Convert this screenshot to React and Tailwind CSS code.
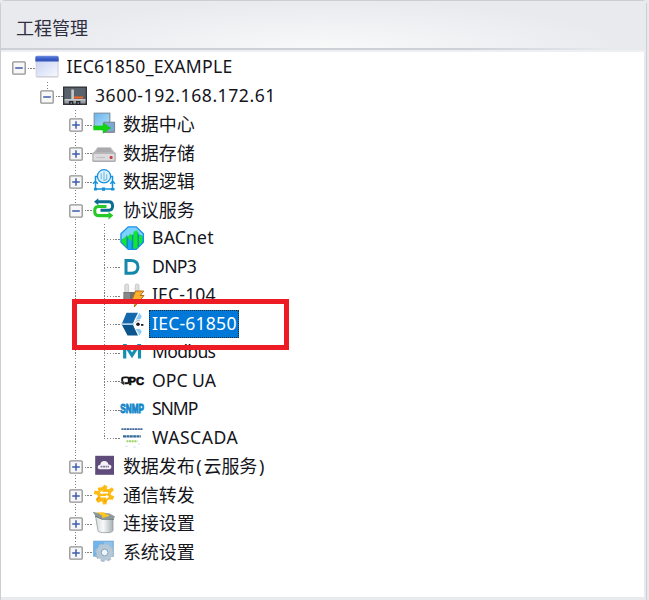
import React from "react";

const svg = "block h-6 w-6 overflow-visible";

function WindowIcon() {
  return (
    <svg className={svg} viewBox="0 0 24 24">
      <defs>
        <linearGradient id="win" x1="0" y1="0" x2="1" y2="1">
          <stop offset="0" stopColor="#c9d3f3" />
          <stop offset="1" stopColor="#f6f8ff" />
        </linearGradient>
        <linearGradient id="winbar" x1="0" y1="0" x2="0" y2="1">
          <stop offset="0" stopColor="#6f8fe0" />
          <stop offset="0.5" stopColor="#3a5cc4" />
          <stop offset="1" stopColor="#3152b8" />
        </linearGradient>
      </defs>
      <rect x="0.7" y="1.5" width="22.8" height="21" rx="1.5" fill="#c9cad0" />
      <rect x="1.4" y="6" width="21.2" height="15.2" fill="url(#win)" />
      <path d="M.3 6.6V2.5Q.3.8 2 .8H22Q23.7.8 23.7 2.5V6.6Z" fill="url(#winbar)" />
    </svg>
  );
}

function DeviceIcon() {
  return (
    <svg className={svg} viewBox="0 0 24 24">
      <rect x="0" y="2.5" width="24" height="18.5" fill="#303338" />
      <rect x="1.3" y="3.8" width="21.4" height="12" fill="#59616a" />
      <path d="M8.3 5.5h2.6v9.5H22.5v2.5H1.5V15H8.3Z" fill="#c6c9cc" />
      <rect x="11" y="12.5" width="9" height="2" fill="#f2661f" />
      <path d="M1.5 16.5H22.5V19.5H1.5Z" fill="#999ea3" />
      <rect x="6" y="17" width="4.4" height="4" fill="#25282c" />
      <rect x="13" y="17" width="4.4" height="4" fill="#25282c" />
      <rect x="7.5" y="18.3" width="1.5" height="1.5" fill="#8a8f94" />
      <rect x="14.5" y="18.3" width="1.5" height="1.5" fill="#8a8f94" />
    </svg>
  );
}

function DataCenterIcon() {
  return (
    <svg className={svg} viewBox="0 0 24 24">
      <defs>
        <linearGradient id="scr" x1="0" y1="0" x2="1" y2="1">
          <stop offset="0" stopColor="#69b5ee" />
          <stop offset="1" stopColor="#b4def8" />
        </linearGradient>
      </defs>
      <rect x="2.2" y="1.2" width="15.6" height="14.5" fill="url(#scr)" stroke="#7d94a6" strokeWidth="1.2" />
      <rect x="12" y="10.3" width="10.5" height="9.6" fill="#7ba9d4" stroke="#7c8b98" strokeWidth="1.2" />
      <path d="M12 20.2H22.5" stroke="#8a9198" strokeWidth="1.5" />
      <path d="M1.7 13.9H11V10.8L18.7 16L11 21.2V18H1.7Z" fill="#12d412" stroke="#16b81b" strokeWidth="0.5" />
    </svg>
  );
}

function DriveIcon() {
  return (
    <svg className={svg} viewBox="0 0 24 24">
      <path d="M5.5 6.3H18.7L23.8 13H.4Z" fill="#bcbcbe" />
      <path d="M6 7H18L20.5 11H3.5Z" fill="#aaaaad" />
      <path d="M.3 12.7Q.3 11.6 1.5 11.6H22.6Q23.8 11.6 23.8 12.7V19.5Q23.8 21 22.4 21H1.7Q.3 21 .3 19.5Z" fill="#adadb0" />
      <rect x="1.5" y="12.8" width="21" height="6.8" rx="1" fill="#dcdcdf" />
      <path d="M4.5 16.5H13" stroke="#c0c0c4" strokeWidth="1.2" />
      <rect x="17.6" y="15" width="3" height="3" rx="1" fill="#c84249" />
    </svg>
  );
}

function LogicIcon() {
  return (
    <svg className={svg} viewBox="0 0 24 24" fill="none" stroke="#1692dc" strokeWidth="1.5">
      <path d="M6 7.5H3.5V20H20.5V7.5H18" />
      <circle cx="12" cy="7.3" r="6.6" fill="#dff2fb" strokeWidth="1.2" />
      <path d="M9.2 4.2V10.2M12 2.7V11.5L14.7 10.4V5.2" stroke="#79bfe3" strokeWidth="1.2" />
      <path d="M1 14.8L3.4 12.4L5.8 14.8M18.2 14.8L20.7 12.4L23 14.8" />
      <path d="M10 18.4H13V21.8H10Z" fill="#1692dc" stroke="none" />
      <path d="M2 20.2H5M19 20.2H22.5" strokeWidth="2.5" />
    </svg>
  );
}

function ProtocolIcon() {
  return (
    <svg className={svg} viewBox="0 0 24 24" fill="none">
      <path d="M5.5 3.8H17Q20.6 3.8 20.6 8Q20.6 12.2 17 12.2H8.5" stroke="#0b6e91" strokeWidth="2.9" />
      <path d="M6.3 .3V7.3L2 3.8Z" fill="#0b6e91" />
      <path d="M14.5 8.5H6.2Q2.7 8.5 2.7 13Q2.7 17.6 6.2 17.6H17" stroke="#27c928" strokeWidth="3.1" />
      <path d="M16.5 13.8V21.4L21.3 17.6Z" fill="#27c928" />
    </svg>
  );
}

function BacnetIcon() {
  return (
    <svg className={svg} viewBox="0 0 24 24">
      <path d="M8 .2H16.5L24 7.6V16.4L16.5 24H8L.3 16.4V7.6Z" fill="#198dea" />
      <path d="M8.4 1.5H16L22.7 8V10L15.5 7L8.5 11L1.6 13.5V8Z" fill="#7bd3fb" />
      <path d="M1.5 14L7 9.4V21.6L1.5 16Z" fill="#10e735" />
      <path d="M8.2 10L10.5 7.5L12.3 10V15L8.2 19Z" fill="#10e735" />
      <path d="M8 19V12.5L11.5 15V23H8Z" fill="#19a6f2" />
      <path d="M13.4 6L16.5 4L18 6.5V21L16.2 22.8H13.4Z" fill="#10e735" />
      <path d="M19 10L21 8.7L22.5 10.5V16L19 19.5Z" fill="#10e735" />
      <path d="M7 9.4V21.8M12.3 9V23M18 6.5V21" stroke="#0a8a78" strokeWidth="0.8" />
    </svg>
  );
}

function DnpIcon() {
  return (
    <svg className={svg} viewBox="0 0 24 24">
      <path d="M6 5.5V18.3H10.5Q18 18.3 18 11.9Q18 5.5 10.5 5.5Z" fill="none" stroke="#1587ab" strokeWidth="3" />
    </svg>
  );
}

function PlugIcon() {
  return (
    <svg className={svg} viewBox="0 0 24 24">
      <rect x="4.8" y="1" width="3.8" height="9" rx="1.6" fill="#dededf" stroke="#bdbdbf" strokeWidth="0.7" />
      <rect x="15.2" y="1" width="3.8" height="9" rx="1.6" fill="#dededf" stroke="#bdbdbf" strokeWidth="0.7" />
      <path d="M3.4 9H20.7V16L16.5 20H7.3L3.4 16Z" fill="#6e6e70" />
      <path d="M4.2 9.7H10V17H6.5L4.2 15Z" fill="#88888a" />
      <path d="M15.5 8H23.8L20.2 12.5H24L14.3 24L15.8 17H12Z" fill="#f7b12f" stroke="#b76816" strokeWidth="1" />
    </svg>
  );
}

function IecIcon() {
  return (
    <svg className={svg} viewBox="0 0 24 24">
      <path d="M6.5 .7H18L14.5 7.8L13 11.4H2Z" fill="#1469ad" />
      <path d="M2 13H13L14.5 16.3L18 23.5H7.5Z" fill="#0c558c" />
      <path d="M19.5 .7L21.8 4.8L20 7.5H15.8Z" fill="#8dccf6" />
      <path d="M19.5 23.5L21.8 19.5L20 17H15.8Z" fill="#8dccf6" />
      <path d="M1 12.2H14" stroke="#86bce0" strokeWidth="0.9" />
      <circle cx="18" cy="12.3" r="1.8" fill="#171b20" />
      <rect x="21" y="12" width="2.4" height="1.8" fill="#222" />
      <path d="M15 10.5L17 8.7H20" stroke="#8b9aa5" strokeWidth="0.8" fill="none" />
    </svg>
  );
}

function ModbusIcon() {
  return (
    <svg className={svg} viewBox="0 0 24 24">
      <path d="M4.7 18.6V5.5H5.6L12 15.3L18.4 5.5H19.5V18.6" fill="none" stroke="#168eb2" strokeWidth="3.2" />
    </svg>
  );
}

function OpcIcon() {
  return (
    <svg className={svg} viewBox="0 0 24 24">
      <text x="8.6" y="15.5" textLength="15.6" lengthAdjust="spacingAndGlyphs" fontFamily="Liberation Sans" fontWeight="700" fontSize="11" fill="#0d0d0d" stroke="#0d0d0d" strokeWidth="0.6">PC</text>
      <path d="M2.2 12.8V9.8Q2.2 8.4 4.5 8.4H7Q8.8 8.4 8.8 10V12.5Q8.8 14.3 7 14.3H4.5" fill="none" stroke="#151515" strokeWidth="1.9" />
      <path d="M.2 13.5L4.2 12.3V16.2Z" fill="#333" />
    </svg>
  );
}

function SnmpIcon() {
  return (
    <svg className={svg} viewBox="0 0 24 24">
      <g transform="translate(0 16.3) scale(1 1.45)">
        <text x="0.3" y="0" textLength="23.6" lengthAdjust="spacingAndGlyphs" fontFamily="Liberation Sans" fontWeight="700" fontSize="8.6" fill="#1687c9" stroke="#1687c9" strokeWidth="0.7">SNMP</text>
      </g>
    </svg>
  );
}

function WascadaIcon() {
  return (
    <svg className={svg} viewBox="0 0 24 24">
      <path d="M1.4 3.2H22.8" stroke="#416a9b" strokeWidth="1.8" strokeDasharray="2.2 .5" />
      <path d="M3 10.3H20.8" stroke="#356b99" strokeWidth="2.2" strokeDasharray="3 .4" />
      <path d="M6.5 15.2H17.5" stroke="#9ad466" strokeWidth="2" strokeDasharray="2 .6" />
      <path d="M5 20.3H8M13 21H16M18 18H20" stroke="#d5e4ef" strokeWidth="1" />
    </svg>
  );
}

function CloudIcon() {
  return (
    <svg className={svg} viewBox="0 0 24 24">
      <rect x="3.2" y="1.8" width="18.8" height="19" fill="#5f4c7b" />
      <path d="M8 15.3Q5.3 15 5.8 12.4Q6.2 10.8 8.2 10.8Q8.8 6.8 12.4 7Q15.8 7.1 16.4 10.5Q19.6 10.5 19.4 13.2Q19.1 15.3 17 15.3Z" fill="#f4f1f7" />
      <path d="M8.5 12.6H17" stroke="#8b7da1" strokeWidth="1.6" strokeDasharray="2 .5" />
    </svg>
  );
}

function GearIcon() {
  return (
    <svg className={svg} viewBox="0 0 24 24">
      <path
        d="M5.5 4.7L8 4.6L10.5 4L12.3 1.7L15.3 3.3L14.7 6L17 6.3L20 4.2L22 7L19 9.7L18.7 11.7L22.3 13.5L20.8 16.8L16.7 16.5L15 18L14.5 21.2L11 21.5L10 18.2L5.7 19.7L3.7 16.6L6 13.7L5.3 11.8L1.8 11L2.5 7.5L6.7 8Z"
        fill="#fdbb14"
      />
      <path d="M16 9.7H9.2M15 13.7H8.5" stroke="#fff" strokeWidth="1.4" />
      <path d="M10.5 7.2L7.5 9.7L10.5 11.5ZM14 11.7L17.2 13.7L14 16Z" fill="#fff" />
      <path d="M12 17L14 19M7 14L4.5 17" stroke="#f59c12" strokeWidth="1.4" />
    </svg>
  );
}

function ConnectIcon() {
  return (
    <svg className={svg} viewBox="0 0 24 24">
      <defs>
        <linearGradient id="bin" x1="0" y1="0" x2="1" y2="0">
          <stop offset="0" stopColor="#d5dbdd" />
          <stop offset="0.45" stopColor="#f7f9f9" />
          <stop offset="1" stopColor="#a8b1b4" />
        </linearGradient>
      </defs>
      <path d="M3.5 5H21V19.4Q20.5 21.7 14 21.7Q6.5 21.7 6 20Z" fill="url(#bin)" stroke="#949d9f" strokeWidth="0.8" />
      <path d="M.5 .8L5 1.7L17 2.3L23 5.5L22 7.6L10 7.8L3.5 5Z" fill="#8b999c" />
      <path d="M4.5 1.6L12.5 1.2L14 3.5H17V5L10.5 7L10 4.4Z" fill="#ffc51e" />
      <path d="M3 5L10 8.2H22" stroke="#616c6e" strokeWidth="1" fill="none" />
    </svg>
  );
}

function SettingsIcon() {
  return (
    <svg className={svg} viewBox="0 0 24 24">
      <rect x="1.7" y="1.2" width="19.5" height="15" fill="#89c3ef" stroke="#75a6cd" strokeWidth="1" />
      <path d="M2.2 1.7H12V15.5H2.2Z" fill="#6eb4ec" />
      <circle cx="12.6" cy="12.5" r="8.1" fill="none" stroke="#a9bbca" strokeWidth="3" strokeDasharray="3.6 2.76" />
      <circle cx="12.6" cy="12.5" r="5.8" fill="none" stroke="#b5c8d8" strokeWidth="5" />
      <circle cx="12.6" cy="12.5" r="3.4" fill="#eef5fa" stroke="#8ba3ba" strokeWidth="1" />
    </svg>
  );
}

const rows = [
  { level: 0, box: "-", icon: WindowIcon, label: "IEC61850_EXAMPLE", track: "tracking-[0.25px]" },
  { level: 1, box: "-", icon: DeviceIcon, label: "3600-192.168.172.61", track: "tracking-[0.53px]", line: "top" },
  { level: 2, box: "+", icon: DataCenterIcon, label: "数据中心", line: "full" },
  { level: 2, box: "+", icon: DriveIcon, label: "数据存储", line: "full" },
  { level: 2, box: "+", icon: LogicIcon, label: "数据逻辑", line: "full" },
  { level: 2, box: "-", icon: ProtocolIcon, label: "协议服务", line: "full" },
  { level: 3, icon: BacnetIcon, label: "BACnet", track: "tracking-[0.2px]", line: "full" },
  { level: 3, icon: DnpIcon, label: "DNP3", track: "tracking-[-0.7px]", line: "full" },
  { level: 3, icon: PlugIcon, label: "IEC-104", track: "tracking-[0.15px]", line: "full" },
  { level: 3, icon: IecIcon, label: "IEC-61850", track: "tracking-[0.2px]", line: "full", selected: true },
  { level: 3, icon: ModbusIcon, label: "Modbus", track: "tracking-[-0.7px]", line: "full" },
  { level: 3, icon: OpcIcon, label: "OPC UA", track: "tracking-[0px]", line: "full" },
  { level: 3, icon: SnmpIcon, label: "SNMP", track: "tracking-[-1.1px]", line: "full" },
  { level: 3, icon: WascadaIcon, label: "WASCADA", track: "tracking-[0.5px]", line: "top" },
  { level: 2, box: "+", icon: CloudIcon, label: "数据发布(云服务)", line: "full" },
  { level: 2, box: "+", icon: GearIcon, label: "通信转发", line: "full" },
  { level: 2, box: "+", icon: ConnectIcon, label: "连接设置", line: "full" },
  { level: 2, box: "+", icon: SettingsIcon, label: "系统设置", line: "top" },
];

const vdots =
  "w-px bg-[repeating-linear-gradient(to_bottom,#808080_0px,#808080_1.4px,transparent_1.4px,transparent_2.85px)]";
const hdots =
  "h-px bg-[repeating-linear-gradient(to_right,#808080_0px,#808080_1.4px,transparent_1.4px,transparent_2.85px)]";

function Expander({ kind }) {
  return (
    <svg className="relative block h-[14px] w-[14px]" viewBox="0 0 14 14">
      <rect x="0.8" y="0.8" width="12.4" height="12.4" rx="1" fill="#f7f7f7" stroke="#929292" strokeWidth="1.3" />
      <path d="M3.2 7H10.8" stroke="#3c5cab" strokeWidth="1.5" />
      {kind === "+" && <path d="M7 3.2V10.8" stroke="#3c5cab" strokeWidth="1.5" />}
    </svg>
  );
}

function Row({ level, box, icon: Icon, label, track = "", line, selected }) {
  const cells = [];
  for (let i = 0; i < level; i++) {
    cells.push(
      <div key={i} className="flex h-full w-[28.5px] shrink-0 justify-center">
        {level === 3 && i === 2 && <div className={vdots + " h-full"} />}
      </div>
    );
  }
  const cjk = label.charCodeAt(0) > 255;
  return (
    <div className="flex h-[28.5px] items-center pl-[3.5px]">
      {cells}
      <div className="grid h-full w-[30px] shrink-0 grid-cols-[28.5px_1.5px] items-center">
        <div className="col-start-1 row-start-1 flex h-full justify-center">
          {line && <div className={vdots + (line === "full" ? " h-full" : " h-[15.5px]")} />}
        </div>
        <div className={"col-start-1 col-end-3 row-start-1 ml-[14px] mt-[2px] " + hdots} />
        {box && (
          <div className="col-start-1 row-start-1 mt-[2px] flex justify-center">
            <Expander kind={box} />
          </div>
        )}
      </div>
      <div className="w-6 shrink-0">
        <Icon />
      </div>
      <div
        className={
          "flex h-[28px] items-center whitespace-pre text-[17.6px] " +
          track +
          (selected
            ? " ml-[5px] border-[1.5px] border-dotted border-[#e0a060] bg-[#0078d7] pl-[2px] pr-px text-white outline-1 -outline-offset-1 outline-dotted outline-[#1f2c38]"
            : cjk
              ? " ml-[7.5px] text-[#15151c]"
              : " ml-2 text-[#15151c]")
        }
      >
        {cjk ? (
          [...label].map((c, i) => (
            <span
              key={i}
              className={
                "flex justify-center text-[18px] leading-none " + (c === "(" || c === ")" ? "w-[9px]" : "w-[17.9px]")
              }
            >
              {c}
            </span>
          ))
        ) : (
          <span className="leading-none">{label}</span>
        )}
      </div>
    </div>
  );
}

export default function App() {
  return (
    <div className="relative h-[600px] w-[649px] overflow-hidden bg-[#e7e9ed] pr-[2px] font-['Noto_Sans','Noto_Sans_CJK_SC',sans-serif]">
      <div className="flex h-full flex-col rounded-t-[5px] border-x-[1.5px] border-t-[1.5px] border-[#cdced5] bg-[#e9eaee]">
        <div className="flex h-[47px] shrink-0 items-center bg-[radial-gradient(ellipse_300px_48px_at_50%_100%,#f8f9f9,#e9eaee)] pl-[15px] pt-[6px]">
          <span className="text-[18px] leading-none text-[#2f2f42]">工程管理</span>
        </div>
        <div className="h-[2px] shrink-0 bg-[linear-gradient(to_right,#cfd0d7,#cfd0d7_72%,#e9eaee_95%)]" />
        <div className="h-[2px] shrink-0 bg-[#eeeff2]" />
        <div className="mr-[2px] h-[545px] shrink-0 bg-white pt-px">
          {rows.map((r) => (
            <Row key={r.label} {...r} />
          ))}
        </div>
      </div>
      <div className="absolute left-[72px] top-[299px] h-[51px] w-[217px] border-[5px] border-[#ed1c24]" />
    </div>
  );
}
